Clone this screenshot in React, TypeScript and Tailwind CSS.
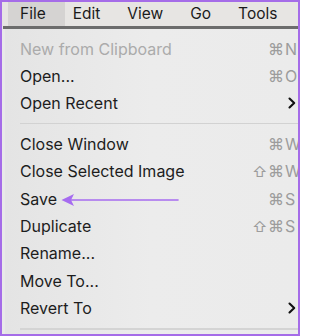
import { ReactNode } from "react";

type Item = {
  label: string;
  disabled?: boolean;
  shift?: boolean;
  keyName?: string;
  submenu?: boolean;
  arrow?: boolean;
};

const groupOne: Item[] = [
  { label: "New from Clipboard", disabled: true, keyName: "N" },
  { label: "Open...", keyName: "O" },
  { label: "Open Recent", submenu: true },
];

const groupTwo: Item[] = [
  { label: "Close Window", keyName: "W" },
  { label: "Close Selected Image", shift: true, keyName: "W" },
  { label: "Save", keyName: "S", arrow: true },
  { label: "Duplicate", shift: true, keyName: "S" },
  { label: "Rename..." },
  { label: "Move To..." },
  { label: "Revert To", submenu: true },
];

const Chevron = () => (
  <svg width="8" height="12" viewBox="0 0 8 12" className="mr-[2px]">
    <path d="M1.5 1.5 L6.2 6 L1.5 10.5" fill="none" stroke="#111" strokeWidth="2.1" strokeLinecap="round" strokeLinejoin="round" />
  </svg>
);

const PurpleArrow = () => (
  <svg width="120" height="14" viewBox="0 0 120 14" className="ml-[4px] mt-[3px]">
    <line x1="8" y1="7" x2="117" y2="7" stroke="#a66cf0" strokeWidth="1.6" strokeLinecap="round" />
    <path d="M0.5 7 L13 1 L10 7 L13 13 Z" fill="#a66cf0" />
  </svg>
);

const Row = ({ item }: { item: Item }) => (
  <div className="flex h-[27.4px] items-center pl-[15px]">
    <span className={item.disabled ? "text-[#ababab]" : "text-[#1d1d1d]"}>{item.label}</span>
    {item.arrow ? <PurpleArrow /> : null}
    <div className="ml-auto flex items-center text-[#9c9c9c]">
      {item.keyName ? (
        <>
          <span className="w-[16px] text-left text-[15px]">{item.shift ? "⇧" : ""}</span>
          <span className="w-[17px] text-[16px]">⌘</span>
          <span className="w-[13px]">{item.keyName}</span>
        </>
      ) : null}
      {item.submenu ? <Chevron /> : null}
    </div>
  </div>
);

const Separator = ({ children }: { children?: ReactNode }) => (
  <div className="my-[6px] ml-[15px] h-px bg-[#d2d2d2]">{children}</div>
);

export default function App() {
  return (
    <div
      className="relative h-[336px] w-[300px] overflow-hidden border-2 border-[#a56ce8] bg-[#e9e9e9]"
      style={{ fontFamily: "Inter, 'Noto Sans', sans-serif" }}
    >
      <div className="flex h-[24px] items-stretch bg-[#e7e5e3] pl-[6px] text-[15.5px] text-[#1b1b1b]">
        <div className="flex items-center bg-[#d5d3d2] pl-[12px] pr-[19px]">File</div>
        <div className="ml-[8px] flex items-center gap-[27px]">
          <span>Edit</span>
          <span>View</span>
          <span>Go</span>
          <span>Tools</span>
        </div>
      </div>
      <div className="ml-px h-[3px] bg-[#6c6c6c]" />
      <div className="ml-[3px] h-full bg-gradient-to-r from-[#e4e4e4] via-[#ececec] to-[#ebebeb] pt-[6px] text-[16px] leading-none">
        {groupOne.map((it) => (
          <Row key={it.label} item={it} />
        ))}
        <Separator />
        {groupTwo.map((it) => (
          <Row key={it.label} item={it} />
        ))}
        <div className="mt-[6px] ml-[15px] h-[2px] bg-[#d4d4d4]" />
      </div>
    </div>
  );
}
